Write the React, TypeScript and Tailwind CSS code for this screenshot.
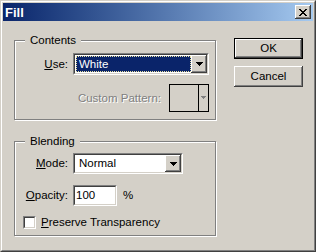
import React from "react";

// bevel helpers
const raised =
  "shadow-[inset_-1px_-1px_0_#404040,inset_1px_1px_0_#ffffff,inset_-2px_-2px_0_#808080,inset_2px_2px_0_#d4d0c8]";

function Sunken({ className, children }: { className?: string; children?: React.ReactNode }) {
  return (
    <div
      className={`border border-t-[#808080] border-l-[#808080] border-r-white border-b-white ${className ?? ""}`}
    >
      <div className="flex h-full w-full items-center border border-t-[#404040] border-l-[#404040] border-r-[#d4d0c8] border-b-[#d4d0c8] bg-white">
        {children}
      </div>
    </div>
  );
}

function Arrow({ color = "#000" }: { color?: string }) {
  return (
    <svg width="7" height="4" viewBox="0 0 7 4" shapeRendering="crispEdges">
      <rect x="0" y="0" width="7" height="1" fill={color} />
      <rect x="1" y="1" width="5" height="1" fill={color} />
      <rect x="2" y="2" width="3" height="1" fill={color} />
      <rect x="3" y="3" width="1" height="1" fill={color} />
    </svg>
  );
}

function DropButton() {
  return (
    <div className={`flex h-full w-[16px] items-center justify-center bg-[#d4d0c8] ${raised}`}>
      <Arrow />
    </div>
  );
}

function CloseGlyph() {
  // pixel X of the classic caption button
  const rows = ["11000011", "01100110", "00111100", "00011000", "00111100", "01100110", "11000011"];
  return (
    <svg width="8" height="7" viewBox="0 0 8 7" shapeRendering="crispEdges">
      {rows.map((r, y) =>
        r.split("").map((c, x) => (c === "1" ? <rect key={`${x}-${y}`} x={x} y={y} width="1" height="1" fill="#000" /> : null))
      )}
    </svg>
  );
}

function Group({ title, className, children }: { title: string; className?: string; children?: React.ReactNode }) {
  return (
    <div
      className={`relative w-[202px] border border-[#808080] shadow-[inset_1px_1px_0_#ffffff,1px_1px_0_#ffffff] ${className ?? ""}`}
    >
      <span className="absolute left-[10px] top-[-7px] bg-[#d4d0c8] px-[5px] leading-[13px]">{title}</span>
      {children}
    </div>
  );
}

export default function App() {
  return (
    <div className="h-[252px] w-[316px] select-none font-['Liberation_Sans',Arial,sans-serif] text-[11.5px] leading-[13px] text-black">
      <div className="h-full w-full border border-t-[#d4d0c8] border-l-[#d4d0c8] border-r-[#404040] border-b-[#404040]">
        <div className="flex h-full w-full flex-col border border-t-white border-l-white border-r-[#808080] border-b-[#808080] bg-[#d4d0c8] p-px">
          {/* title bar */}
          <div className="flex h-[18px] items-center justify-between bg-linear-to-r from-[#0a246a] to-[#a6caf0] pl-[2px] pr-[2px]">
            <span className="text-[13px] font-bold text-white">Fill</span>
            <div className={`flex h-[14px] w-[16px] items-center justify-center bg-[#d4d0c8] ${raised}`}>
              <CloseGlyph />
            </div>
          </div>

          <div className="flex">
            {/* left column */}
            <div className="w-[214px] pl-[11px]">
              <Group title="Contents" className="mt-[19px] h-[80px] pt-[12px]">
                <div className="flex h-[22px] items-center">
                  <span className="w-[58px] pr-[5px] text-right">
                    <u>U</u>se:
                  </span>
                  <Sunken className="h-[22px] w-[136px]">
                    <div className="ml-px flex h-[16px] flex-1 items-center border border-dotted border-[#e8e0a0] bg-[#0a246a] pl-[2px] text-white">
                      White
                    </div>
                    <DropButton />
                  </Sunken>
                </div>
                <div className="mt-[9px] flex items-center">
                  <span className="w-[154px] pr-[8px] text-right text-[#808080] [text-shadow:1px_1px_0_#ffffff]">
                    Custom Pattern:
                  </span>
                  <div className="flex h-[28px] w-[40px] border border-black bg-[#d4d0c8]">
                    <div className="flex-1" />
                    <div className="flex w-[10px] items-center justify-center border-l border-black pb-[1px]">
                      <svg width="5" height="3" viewBox="0 0 5 3" shapeRendering="crispEdges">
                        <rect x="0" y="0" width="5" height="1" fill="#808080" />
                        <rect x="1" y="1" width="3" height="1" fill="#808080" />
                        <rect x="2" y="2" width="1" height="1" fill="#808080" />
                      </svg>
                    </div>
                  </div>
                </div>
              </Group>

              <Group title="Blending" className="mt-[21px] h-[95px] pt-[11px]">
                <div className="flex h-[21px] items-center">
                  <span className="w-[58px] pr-[5px] text-right">
                    <u>M</u>ode:
                  </span>
                  <Sunken className="h-[21px] w-[110px]">
                    <span className="flex-1 pl-[4px]">Normal</span>
                    <DropButton />
                  </Sunken>
                </div>
                <div className="mt-[11px] flex h-[21px] items-center">
                  <span className="w-[58px] pr-[5px] text-right">
                    <u>O</u>pacity:
                  </span>
                  <Sunken className="h-[21px] w-[44px]">
                    <span className="pl-px">100</span>
                  </Sunken>
                  <span className="ml-[6px]">%</span>
                </div>
                <div className="mt-[10px] flex h-[13px] items-center pl-[8px]">
                  <Sunken className="h-[13px] w-[13px]" />
                  <span className="ml-[5px]">
                    <u>P</u>reserve Transparency
                  </span>
                </div>
              </Group>
            </div>

            {/* buttons */}
            <div className="ml-[17px] mt-[17px] flex flex-col gap-[7px]">
              <div className="h-[21px] w-[69px] border border-black">
                <div className={`flex h-full w-full items-center justify-center bg-[#d4d0c8] ${raised}`}>OK</div>
              </div>
              <div className={`flex h-[21px] w-[69px] items-center justify-center bg-[#d4d0c8] ${raised}`}>Cancel</div>
            </div>
          </div>
        </div>
      </div>
    </div>
  );
}
